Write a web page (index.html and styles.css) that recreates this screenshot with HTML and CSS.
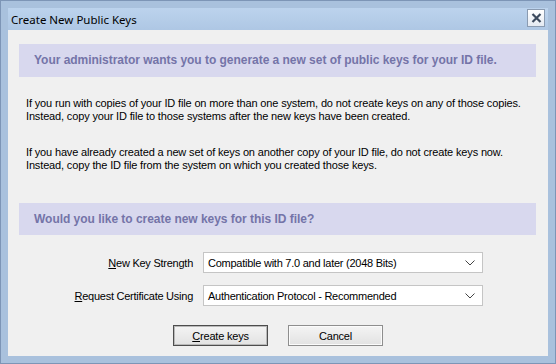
FILE: index.html
```html
<!DOCTYPE html>
<html lang="en">
<head>
  <meta charset="UTF-8">
  <title>Create New Public Keys</title>
  <link rel="stylesheet" href="styles.css">
</head>
<body>
  <div class="window">
    <div class="titlebar">
      <span class="title">Create New Public Keys</span>
      <button class="close" aria-label="Close">
        <svg width="11" height="10" viewBox="0 0 11 10">
          <path d="M1.5 1 L9.5 9 M9.5 1 L1.5 9" stroke="#3c4a5e" stroke-width="2.2" fill="none"/>
        </svg>
      </button>
    </div>

    <div class="client">
      <div class="band">Your administrator wants you to generate a new set of public keys for your ID file.</div>

      <p class="note">If you run with copies of your ID file on more than one system, do not create keys on any of those copies.<br>
        Instead, copy your ID file to those systems after the new keys have been created.</p>

      <p class="note">If you have already created a new set of keys on another copy of your ID file, do not create keys now.<br>
        Instead, copy the ID file from the system on which you created those keys.</p>

      <div class="band band-second">Would you like to create new keys for this ID file?</div>

      <div class="form">
        <label class="label"><u>N</u>ew Key Strength</label>
        <div class="select">
          <span>Compatible with 7.0 and later (2048 Bits)</span>
          <svg width="10" height="6" viewBox="0 0 10 6"><path d="M0.5 0.5 L5 5 L9.5 0.5" stroke="#444" stroke-width="1" fill="none"/></svg>
        </div>
        <label class="label"><u>R</u>equest Certificate Using</label>
        <div class="select">
          <span>Authentication Protocol - Recommended</span>
          <svg width="10" height="6" viewBox="0 0 10 6"><path d="M0.5 0.5 L5 5 L9.5 0.5" stroke="#444" stroke-width="1" fill="none"/></svg>
        </div>
      </div>

      <div class="buttons">
        <button class="btn btn-default"><u>C</u>reate keys</button>
        <button class="btn">Cancel</button>
      </div>
    </div>
  </div>
</body>
</html>
```

FILE: styles.css
```css
body {
  margin: 0;
  padding: 0;
  background: #ffffff;
  font-family: "Liberation Sans", Arial, sans-serif;
}

.window {
  width: 556px;
  height: 364px;
  box-sizing: border-box;
  border: 1px solid #7d95b6;
  padding: 7px;
  background: #a9c1dd;
  display: flex;
  flex-direction: column;
}

.titlebar {
  height: 22px;
  display: flex;
  align-items: center;
  justify-content: space-between;
  background: linear-gradient(to bottom, #bcd3ed, #aec7e4);
}

.title {
  font-family: "Noto Sans", sans-serif;
  font-size: 11.5px;
  color: #000;
  padding-left: 3px;
  padding-top: 1px;
}

.close {
  width: 18px;
  height: 18px;
  margin-right: 3px;
  margin-bottom: 2px;
  padding: 0;
  border: 1px solid #8a9bb1;
  background: linear-gradient(to bottom, #ffffff, #e4eaf2);
  display: flex;
  align-items: center;
  justify-content: center;
}

.client {
  flex: 1;
  background: #f0f0f0;
  padding: 14px 12px 0 11px;
  display: flex;
  flex-direction: column;
}

.band {
  height: 33px;
  background: #d8d8ee;
  color: #7474a8;
  font-weight: bold;
  font-size: 12px;
  letter-spacing: -0.03px;
  line-height: 33px;
  padding-left: 15px;
}

.note {
  font-size: 11px;
  letter-spacing: -0.15px;
  line-height: 13px;
  color: #000;
  margin: 20px 0 0 7px;
  white-space: nowrap;
}

.note + .note {
  margin-top: 23px;
}

.band-second {
  margin-top: 31px;
  height: 32px;
  line-height: 32px;
}

.form {
  display: grid;
  grid-template-columns: 174px 280px;
  column-gap: 10px;
  row-gap: 12px;
  margin-top: 17px;
  align-items: center;
}

.label {
  text-align: right;
  font-size: 11px;
  letter-spacing: -0.25px;
  color: #000;
}

.select {
  height: 21px;
  box-sizing: border-box;
  border: 1px solid #c5c5c5;
  background: #ffffff;
  display: flex;
  align-items: center;
  justify-content: space-between;
  padding: 0 7px 0 4px;
  font-size: 11px;
  letter-spacing: -0.25px;
  color: #000;
}

.buttons {
  display: flex;
  justify-content: center;
  gap: 20px;
  margin-top: 19px;
  padding-left: 1px;
}

.btn {
  width: 95px;
  height: 21px;
  padding: 0;
  font-family: "Liberation Sans", Arial, sans-serif;
  font-size: 11px;
  letter-spacing: -0.2px;
  color: #000;
  border: 1px solid #8e8e8e;
  background: linear-gradient(to bottom, #f4f4f4, #e2e2e2);
  box-shadow: inset 0 0 0 1px #fbfbfb;
}

.btn-default {
  border-color: #4d4d4d;
  box-shadow: inset 0 0 0 1px #b9b9b9;
}
```
